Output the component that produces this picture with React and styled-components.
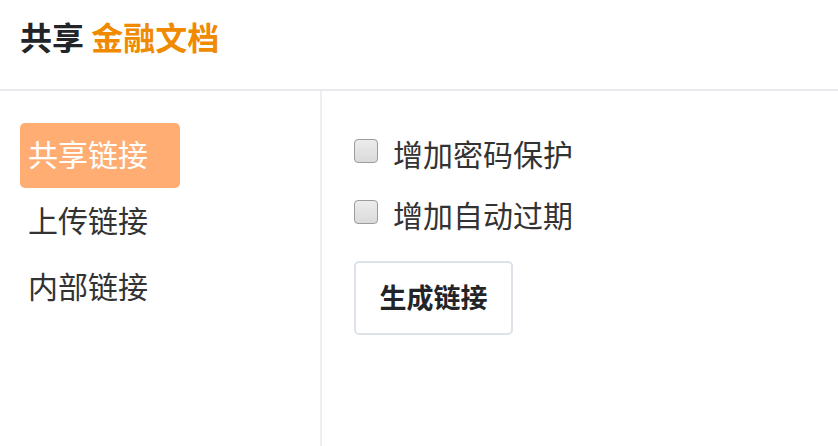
import React from "react";
import styled, { createGlobalStyle } from "styled-components";

const Global = createGlobalStyle`
  html, body { margin: 0; padding: 0; background: #fff; }
  body { font-family: "Noto Sans CJK SC", "Noto Sans", sans-serif; }
`;

const Page = styled.div`
  width: 838px;
  height: 446px;
  display: flex;
  flex-direction: column;
  overflow: hidden;
`;

const Header = styled.header`
  height: 89px;
  border-bottom: 2px solid #e8e9ec;
  display: flex;
  align-items: center;
  padding-left: 20px;
  box-sizing: content-box;
`;

const Title = styled.h1`
  margin: 0;
  font-size: 32px;
  font-weight: 700;
  color: #222428;
  line-height: 1;
  margin-top: -17px;
`;

const Accent = styled.span`
  color: #f08a00;
`;

const Body = styled.div`
  flex: 1;
  display: flex;
`;

const Sidebar = styled.nav`
  width: 322px;
  border-right: 2px solid #efefef;
  padding: 32px 0 0 20px;
  box-sizing: border-box;
  display: flex;
  flex-direction: column;
  flex-shrink: 0;
`;

const NavItem = styled.div`
  width: 160px;
  height: 65px;
  box-sizing: border-box;
  padding: 0 0 5px 8px;
  display: flex;
  align-items: center;
  font-size: 30px;
  border-radius: 5px;
  color: ${(p) => (p.$active ? "#ffffff" : "#333333")};
  background: ${(p) => (p.$active ? "#ffad73" : "transparent")};
  margin-bottom: 1px;
`;

const Content = styled.section`
  padding: 31px 0 0 32px;
  display: flex;
  flex-direction: column;
`;

const CheckRow = styled.label`
  display: flex;
  align-items: center;
  height: 61px;
  font-size: 30px;
  color: #333333;
`;

const Box = styled.span`
  width: 24px;
  height: 24px;
  box-sizing: border-box;
  border: 1px solid #9c9c9c;
  border-radius: 4px;
  background: linear-gradient(#ececec, #dadada);
  margin-right: 15px;
  margin-top: -3px;
  flex-shrink: 0;
`;

const Button = styled.button`
  margin-top: 17px;
  width: 159px;
  height: 74px;
  border: 2px solid #dde1e8;
  border-radius: 5px;
  background: #fff;
  font-family: inherit;
  font-size: 27px;
  font-weight: 700;
  color: #222428;
  cursor: pointer;
  padding: 0 0 3px 0;
`;

export default function App() {
  return (
    <Page>
      <Global />
      <Header>
        <Title>
          共享 <Accent>金融文档</Accent>
        </Title>
      </Header>
      <Body>
        <Sidebar>
          <NavItem $active>共享链接</NavItem>
          <NavItem>上传链接</NavItem>
          <NavItem>内部链接</NavItem>
        </Sidebar>
        <Content>
          <CheckRow>
            <Box />
            增加密码保护
          </CheckRow>
          <CheckRow>
            <Box />
            增加自动过期
          </CheckRow>
          <div>
            <Button>生成链接</Button>
          </div>
        </Content>
      </Body>
    </Page>
  );
}
